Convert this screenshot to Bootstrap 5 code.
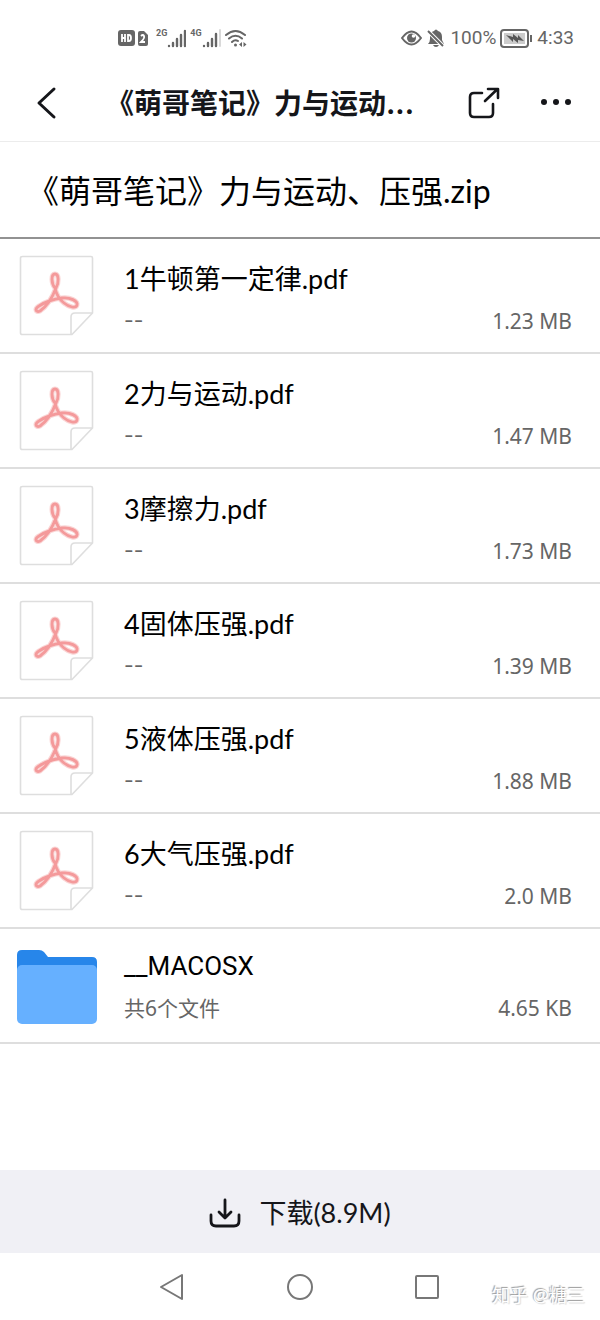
<!DOCTYPE html>
<html lang="zh-CN">
<head>
<meta charset="utf-8">
<meta name="viewport" content="width=device-width, initial-scale=1">
<title>《萌哥笔记》力与运动、压强.zip</title>
<link href="https://cdn.jsdelivr.net/npm/bootstrap@5.3.0/dist/css/bootstrap.min.css" rel="stylesheet">
<style>
  body { font-family: Lato, "Noto Sans CJK SC", sans-serif; color: #000; background: #fff; }
  svg { display: block; flex: none; }
  .status-row { height: 64px; padding: 12px 26px 0 118px; color: #666; font: 19px/24px Roboto, sans-serif; }
  .net-label { font: bold 9px/10px Roboto, sans-serif; padding-bottom: 10px; }
  .app-header { height: 78px; padding: 0 28px 0 32px; border-bottom: 1px solid #ececec; color: #15161a; }
  .app-title { font-family: Inter, "Noto Sans CJK SC", sans-serif; font-size: 28px; line-height: 40px; font-weight: 700; margin: 2px 0 0 44px; }
  .header-actions { gap: 40px; }
  .icon-btn { padding: 0; border: 0; background: none; color: inherit; }
  .archive-name { font-size: 32px; line-height: 48px; font-weight: 400; margin: 0; padding: 25px 27px 22px; border-bottom: 2px solid #929292; }
  .file-row { display: flex; padding: 20px 28px 9px 16px; border-bottom: 2px solid #dedede; color: #000; text-decoration: none; }
  .folder-row { padding-top: 17px; padding-bottom: 12px; }
  .thumb { width: 108px; }
  .thumb-pdf { margin: -4px 0 0 3px; }
  .thumb-folder { margin-top: 4px; }
  .file-name { font-size: 27px; line-height: 40px; }
  .folder-row .file-name { font-family: Roboto, "Noto Sans CJK SC", sans-serif; font-size: 26px; }
  .file-meta { font-family: "Noto Sans", "Noto Sans CJK SC", sans-serif; font-size: 21px; line-height: 44px; color: #666; }
  .no-date { font-family: Inter, sans-serif; }
  .download-btn { gap: 18px; padding: 23px 0 20px; border: 0; background: #f0f0f5; color: #15161a; font-size: 27px; line-height: 40px; }
  .sys-nav { height: 67px; padding: 0 159px; color: #777; }
  .watermark { right: 15px; bottom: 12px; font-family: "Noto Sans", "Noto Sans CJK SC", sans-serif; font-size: 18px; line-height: 26px; color: #fff; text-shadow: -1px -1px 1px #999, 1px 1px 1px #ddd; }
</style>
</head>
<body>
<svg width="0" height="0" class="position-absolute" aria-hidden="true">
  <symbol id="pdf" viewBox="0 0 76 82">
    <path d="M3.500 1.500H72Q73.500 1.500 73.500 3V58L53 79.500H3.500Q1.500 79.500 1.500 78V3Q1.500 1.500 3.500 1.500ZM73.500 58H56Q52 58 52 62V79.500" fill="#fff" stroke="#dedede" stroke-width="1.600"/>
    <path d="M36 33C32 28 32 19 36 19C40 19 40 28 37 33C34 41 28 51 21 56C17 58 15 54 20 51C26 47 35 44 43 43C51 42 59 46 58 50C57 54 50 52 45 48C40 44 37 38 36 33Z" fill="none" stroke="#fad6d6" stroke-width="5"/>
    <path d="M36 33C32 28 32 19 36 19C40 19 40 28 37 33C34 41 28 51 21 56C17 58 15 54 20 51C26 47 35 44 43 43C51 42 59 46 58 50C57 54 50 52 45 48C40 44 37 38 36 33Z" fill="none" stroke="#f49a9b" stroke-width="2.800"/>
  </symbol>
</svg>
<div class="d-flex flex-column min-vh-100">
  <div class="status-row d-flex align-items-center">
    <svg width="30" height="18" viewBox="0 0 30 18" fill="#666">
      <rect y="1" width="17" height="16" rx="3"/><path d="M20 4Q20 2 22 2H26L30 6V15Q30 17 28 17H22Q20 17 20 15Z"/>
      <path d="M4 5V13M4 9H7M7 5V13M10 6V12H11Q13 12 13 9T11 6ZM23 7Q25 5 26 7Q27 9 23 13H27" fill="none" stroke="#fff" stroke-width="1.800"/>
    </svg>
    <span class="net-label ps-2">2G</span>
    <svg width="19" height="20" viewBox="0 0 19 20" stroke="#666" stroke-width="2.400" stroke-linecap="round"><path d="M2 18V17.900M6 18V15M10 18V11M14 18V7M18 18V3"/></svg>
    <span class="net-label ps-1">4G</span>
    <svg width="19" height="20" viewBox="0 0 19 20" stroke="#666" stroke-width="2.400" stroke-linecap="round"><path d="M2 18V17.900M6 18V15M10 18V11M14 18V6"/><path d="M18 18V2" stroke="#d5d5d5" stroke-width="1.800"/></svg>
    <svg class="ms-1" width="22" height="19" viewBox="0 0 22 19" fill="none" stroke="#666" stroke-width="2" stroke-linecap="round"><path d="M1 6Q10.500 -2 20 6M4 9.500Q10.500 4 17 9.500M7 13Q10 10 13 12"/><circle cx="10.500" cy="16" r="1.500" fill="#666" stroke="none"/><path d="M17 13L14 15.500L17 18ZM18.500 13L21.500 15.500L18.500 18Z" fill="#666" stroke="none"/></svg>
    <svg class="ms-auto" width="21" height="16" viewBox="0 0 21 16" fill="none" stroke="#666" stroke-width="2"><path d="M1 8Q10.500 -5 20 8Q10.500 21 1 8Z"/><circle cx="10.500" cy="8" r="4.500" fill="#666" stroke="none"/><circle cx="12.500" cy="6" r="1.800" fill="#fff" stroke="none"/></svg>
    <svg class="ms-1" width="20" height="19" viewBox="0 0 20 19"><path d="M2 15Q4 13 4 10V8Q4 3 8 2Q10 -1 12 2Q16 3 16 8V11L18 15ZM7 16H13Q12 18 10 18T7 16Z" fill="#666"/><path d="M1 1L18 18" stroke="#fff" stroke-width="4"/><path d="M2 2L17 17" stroke="#666" stroke-width="2"/></svg>
    <span class="ms-1">100%</span>
    <svg class="ms-1" width="33" height="19" viewBox="0 0 33 19"><rect x="1" y="1" width="27" height="17" rx="3" fill="#fff" stroke="#666" stroke-width="2"/><rect x="4" y="4" width="21" height="11" fill="#ccc"/><path d="M6 6L13 8L13 5L18 9L18 6L24 12L18 11L18 14L13 10L13 13Z" fill="#555"/><path d="M31 6V13" stroke="#666" stroke-width="2"/></svg>
    <span class="ms-1">4:33</span>
  </div>
  <header class="app-header d-flex align-items-center">
    <button type="button" class="icon-btn" aria-label="返回"><svg width="30" height="36" viewBox="0 0 30 36" fill="none" stroke="currentColor" stroke-width="3" stroke-linecap="round" stroke-linejoin="round"><path d="M22 4L7 18L22 32"/></svg></button>
    <h1 class="app-title text-nowrap">《萌哥笔记》力与运动...</h1>
    <div class="header-actions d-flex ms-auto">
      <button type="button" class="icon-btn" aria-label="分享"><svg width="32" height="32" viewBox="0 0 32 32" fill="none" stroke="currentColor" stroke-width="2.600" stroke-linecap="round" stroke-linejoin="round"><path d="M14 6H6Q2 6 2 10V26Q2 30 6 30H21Q25 30 25 26V17M17 14L29 2.500M20 2H30V11"/></svg></button>
      <button type="button" class="icon-btn" aria-label="更多"><svg width="32" height="32" viewBox="0 0 32 32" fill="currentColor"><circle cx="4" cy="15" r="3"/><circle cx="16" cy="15" r="3"/><circle cx="28" cy="15" r="3"/></svg></button>
    </div>
  </header>
  <main>
    <h2 class="archive-name">《萌哥笔记》力与运动、压强.zip</h2>
    <nav aria-label="文件列表">
      <a class="file-row" href="#"><div class="thumb"><svg class="thumb-pdf" width="76" height="82"><use href="#pdf"/></svg></div><div class="flex-grow-1"><div class="file-name">1牛顿第一定律.pdf</div><div class="file-meta d-flex justify-content-between"><span class="no-date">--</span><span>1.23 MB</span></div></div></a>
      <a class="file-row" href="#"><div class="thumb"><svg class="thumb-pdf" width="76" height="82"><use href="#pdf"/></svg></div><div class="flex-grow-1"><div class="file-name">2力与运动.pdf</div><div class="file-meta d-flex justify-content-between"><span class="no-date">--</span><span>1.47 MB</span></div></div></a>
      <a class="file-row" href="#"><div class="thumb"><svg class="thumb-pdf" width="76" height="82"><use href="#pdf"/></svg></div><div class="flex-grow-1"><div class="file-name">3摩擦力.pdf</div><div class="file-meta d-flex justify-content-between"><span class="no-date">--</span><span>1.73 MB</span></div></div></a>
      <a class="file-row" href="#"><div class="thumb"><svg class="thumb-pdf" width="76" height="82"><use href="#pdf"/></svg></div><div class="flex-grow-1"><div class="file-name">4固体压强.pdf</div><div class="file-meta d-flex justify-content-between"><span class="no-date">--</span><span>1.39 MB</span></div></div></a>
      <a class="file-row" href="#"><div class="thumb"><svg class="thumb-pdf" width="76" height="82"><use href="#pdf"/></svg></div><div class="flex-grow-1"><div class="file-name">5液体压强.pdf</div><div class="file-meta d-flex justify-content-between"><span class="no-date">--</span><span>1.88 MB</span></div></div></a>
      <a class="file-row" href="#"><div class="thumb"><svg class="thumb-pdf" width="76" height="82"><use href="#pdf"/></svg></div><div class="flex-grow-1"><div class="file-name">6大气压强.pdf</div><div class="file-meta d-flex justify-content-between"><span class="no-date">--</span><span>2.0 MB</span></div></div></a>
      <a class="file-row folder-row" href="#"><div class="thumb"><svg class="thumb-folder" width="81" height="74" viewBox="0 0 81 74"><path d="M1 5Q1 0 6 0H23Q26 0 28 2L32 7H76Q81 7 81 12V30H1Z" fill="#2786ea"/><rect x="1" y="15" width="80" height="59" rx="5" fill="#66b0ff"/></svg></div><div class="flex-grow-1"><div class="file-name">__MACOSX</div><div class="file-meta d-flex justify-content-between"><span>共6个文件</span><span>4.65 KB</span></div></div></a>
    </nav>
  </main>
  <button type="button" class="download-btn d-flex justify-content-center align-items-center w-100 mt-auto">
    <svg width="32" height="30" viewBox="0 0 32 30" fill="none" stroke="currentColor" stroke-width="2.800" stroke-linecap="round" stroke-linejoin="round"><path d="M16 2V19M10 14L16 20L22 14M2 17V23Q2 28 7 28H25Q30 28 30 23V17"/></svg>
    <span>下载(8.9M)</span>
  </button>
  <div class="sys-nav d-flex justify-content-between align-items-center position-relative">
    <button type="button" class="icon-btn" aria-label="后退"><svg width="26" height="28" viewBox="0 0 26 28" fill="none" stroke="currentColor" stroke-width="2" stroke-linejoin="round"><path d="M2 14L23 2V26Z"/></svg></button>
    <button type="button" class="icon-btn" aria-label="主页"><svg width="28" height="28" viewBox="0 0 28 28" fill="none" stroke="currentColor" stroke-width="2"><circle cx="15" cy="14" r="12"/></svg></button>
    <button type="button" class="icon-btn" aria-label="最近任务"><svg width="28" height="28" viewBox="0 0 28 28" fill="none" stroke="currentColor" stroke-width="2"><rect x="3" y="3" width="22" height="22" rx="1"/></svg></button>
    <span class="watermark position-absolute">知乎 @糖三</span>
  </div>
</div>
<script src="https://cdn.jsdelivr.net/npm/bootstrap@5.3.0/dist/js/bootstrap.bundle.min.js"></script>
</body>
</html>
